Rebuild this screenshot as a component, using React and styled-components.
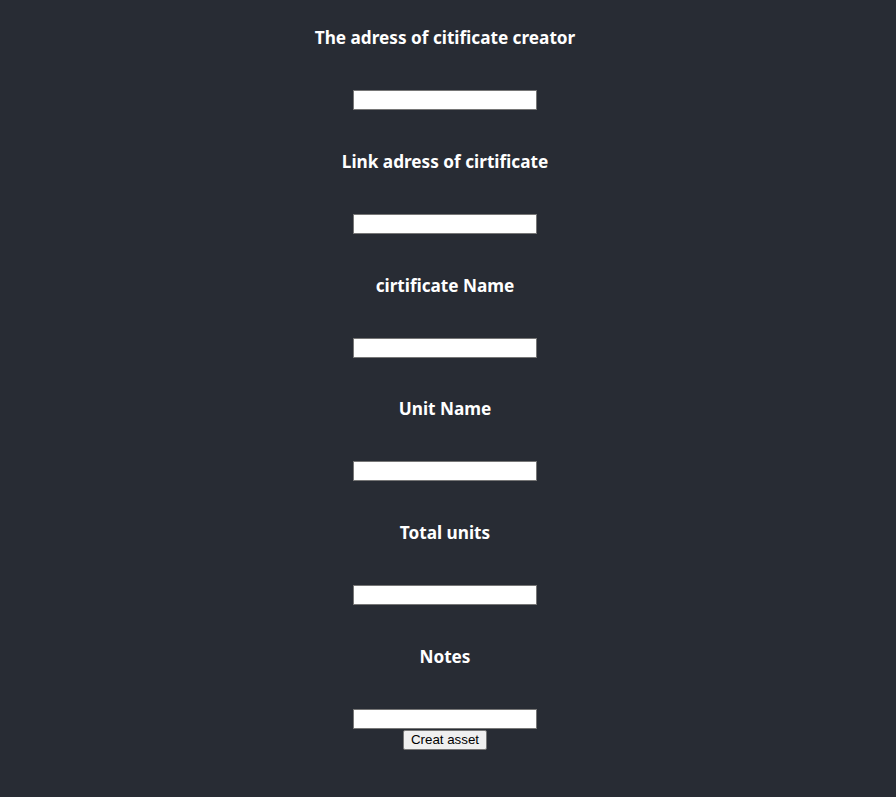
import styled, { createGlobalStyle } from "styled-components";

const GlobalStyle = createGlobalStyle`
  html, body {
    margin: 0;
    background: #282c34;
  }
`;

const Page = styled.div`
  min-height: 797px;
  background: #282c34;
  display: flex;
  flex-direction: column;
  align-items: center;
  padding: 26px 6px 0 0;
  box-sizing: border-box;
`;

const Form = styled.form`
  display: flex;
  flex-direction: column;
  align-items: center;
`;

const Field = styled.div`
  display: flex;
  flex-direction: column;
  align-items: center;
  margin-bottom: ${(p) => (p.$last ? "0" : "39.8px")};
`;

const Label = styled.h3`
  margin: 1px 0 41px;
  font-family: "Noto Sans", "Open Sans", sans-serif;
  font-size: 17.2px;
  font-weight: 700;
  line-height: 22px;
  color: #ffffff;
  text-align: center;
`;

const Input = styled.input`
  width: 184px;
  height: 20px;
  box-sizing: border-box;
  border: 1px solid #767676;
  background: #ffffff;
  padding: 1px 2px;
  font-family: "Liberation Sans", Arial, sans-serif;
  font-size: 13px;
  outline: none;
`;

const Submit = styled.button`
  margin-top: 1px;
  height: 20px;
  padding: 0 7px;
  box-sizing: border-box;
  background: #efefef;
  border: 1px solid #767676;
  border-radius: 2px;
  color: #000;
  font-family: "Liberation Sans", Arial, sans-serif;
  font-size: 13.33px;
  line-height: 16px;
`;

const fields = [
  "The adress of citificate creator",
  "Link adress of cirtificate",
  "cirtificate Name",
  "Unit Name",
  "Total units",
  "Notes",
];

export default function App() {
  return (
    <>
      <GlobalStyle />
      <Page>
        <Form onSubmit={(e) => e.preventDefault()}>
          {fields.map((label, i) => (
            <Field key={label} $last={i === fields.length - 1}>
              <Label>{label}</Label>
              <Input type="text" />
            </Field>
          ))}
          <Submit type="submit">Creat asset</Submit>
        </Form>
      </Page>
    </>
  );
}
